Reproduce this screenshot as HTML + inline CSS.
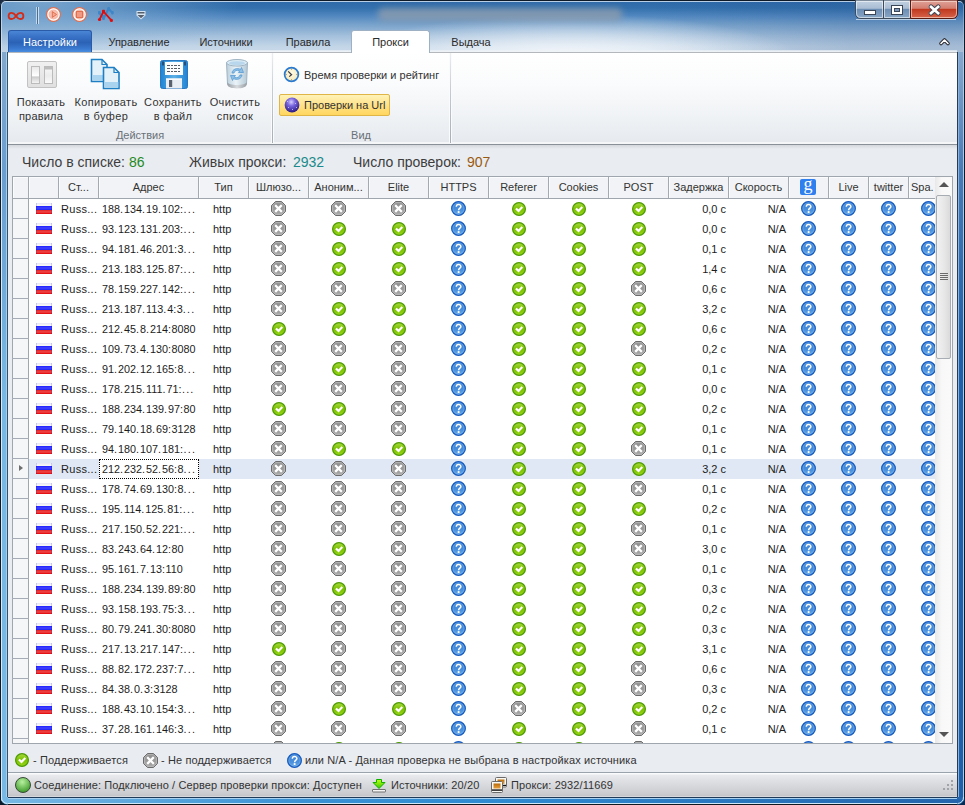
<!DOCTYPE html>
<html><head><meta charset="utf-8">
<style>
*{box-sizing:border-box}
html,body{margin:0;padding:0;width:965px;height:805px;overflow:hidden;font-family:"Liberation Sans",sans-serif;}
body{position:relative;background:#1b2a3e;}
.abs{position:absolute}
#glass{position:absolute;left:0;top:0;width:965px;height:805px;border-radius:6px 6px 0 0;overflow:hidden;
 background:
  radial-gradient(ellipse 230px 46px at 570px 60px, rgba(250,251,253,0.95), rgba(250,251,253,0.45) 55%, rgba(250,251,253,0) 100%),
  radial-gradient(ellipse 200px 60px at 40px 0px, rgba(140,180,215,0.8), rgba(140,180,215,0) 100%),
  linear-gradient(90deg, rgba(30,70,130,0) 650px, rgba(30,70,130,0.18) 850px, rgba(30,70,130,0.18) 965px),
  linear-gradient(180deg,#2d68a8 0px,#3370ac 8px,#5288c0 16px,#7aa4cc 25px,#a4c0dc 36px,#c2d5e7 46px,#c8d9e9 52px,#c8d9e9 805px);}
#tline{position:absolute;left:0;top:0;width:965px;height:805px;border-radius:6px 6px 0 0;border-top:1px solid #0e1a28;border-left:1px solid #0e1a28;border-right:1px solid #0e1a28;}
#tline2{position:absolute;left:1px;top:1px;width:963px;height:804px;border-radius:5px 5px 0 0;border-top:1px solid rgba(230,240,250,0.75);border-left:1px solid rgba(230,240,250,0.6);border-right:1px solid rgba(200,220,240,0.4);}
#lframe{position:absolute;left:0;top:52px;width:8px;height:753px;background:linear-gradient(90deg,#08101a 0,#08101a 1px,#c0e0f8 1px,#c0e0f8 2px,transparent 2px,transparent 6px,#a0d0f0 6px,#a0d0f0 7px,#3a5068 7px),linear-gradient(180deg,#82a8cc 0,#6a9ed0 120px,#78b8e4 350px,#78b8e4 753px)}

#rframe{position:absolute;left:957px;top:52px;width:8px;height:753px;background:linear-gradient(90deg,#2a3a50 0,#2a3a50 1px,#8ab4e0 1px,#8ab4e0 2px,#2060a8 2px,#2060a8 6px,#a0c0e0 6px,#a0c0e0 7px,#0a0a20 7px)}
#rframe2{position:absolute;left:959px;top:52px;width:4px;height:300px;background:linear-gradient(180deg,#88a8cc,rgba(100,140,190,0.6) 40%,rgba(32,96,168,0))}
#bframe{position:absolute;left:0;top:797px;width:965px;height:8px;background:linear-gradient(90deg,#78b8e4 0,#3a92d4 300px,#2f8ad0 500px,#2464ac 965px);}
#bframe2{position:absolute;left:8px;top:797px;width:949px;height:8px;background:linear-gradient(180deg,#1e3a58 0,#1e3a58 1px,#a8d0f0 1px,#a8d0f0 2px,transparent 2px,transparent 6px,#d0e8f8 6px,#d0e8f8 7px,#101820 7px)}
#corners{position:absolute;left:0;top:797px;width:965px;height:8px;}
#client{position:absolute;left:8px;top:52px;width:949px;height:745px;background:#e9ecf1;}
#ttl{position:absolute;left:378px;top:8px;width:244px;height:13px;background:rgba(145,158,172,0.75);filter:blur(3px);border-radius:5px}
/* tabs */
.tab{position:absolute;top:30px;height:22px;font-size:11px;line-height:24px;text-align:center;color:#2a2a2a}
#t0{left:8px;width:84px;line-height:23px;background:linear-gradient(180deg,#4a86d6 0,#3a74c8 5px,#2b62b6 55%,#3a7ad0 85%,#4a8ee0);color:#fff;border:1px solid #2b5aa6;border-bottom:none;border-radius:3px 3px 0 0}
#t4{z-index:2;left:351px;width:79px;background:#fff;border:1px solid #9eb0c4;border-bottom:none;border-radius:3px 3px 0 0;height:23px;line-height:23px}
/* ribbon */
#ribbon{position:absolute;left:8px;top:52px;width:949px;height:93px;background:linear-gradient(180deg,#ffffff 0%,#fafbfc 35%,#eef1f4 75%,#e6e9ee 98%,#f4f6f8 98%);border-top:1px solid #b4b8bc;border-bottom:1px solid #8a9098;}
#rshadow{position:absolute;left:8px;top:145px;width:949px;height:4px;background:linear-gradient(180deg,#d4d7db,#e9ecf1)}
.rl{position:absolute;font-size:11px;line-height:14px;color:#333;text-align:center}
.gl{position:absolute;font-size:11px;color:#6a7078;text-align:center;top:129px}
.gsep{position:absolute;top:53px;width:1px;height:90px;background:linear-gradient(180deg,#eceef0,#c8ccd2 40%,#a8aeb6);box-shadow:-1px 0 0 #fafbfc,1px 0 0 #fafbfc}
/* stats */
.st{position:absolute;top:154px;font-size:14px;line-height:16px;color:#3d3d3d}
/* grid */
#grid{position:absolute;left:12px;top:176px;width:941px;height:568px;border:1px solid #a0a6ae;background:#fff}
#hdr{position:absolute;left:13px;top:177px;width:922px;height:22px;background:#f1f3f6;border-bottom:1px solid #a0a6ae;}
.hc{position:absolute;top:177px;height:21px;font-size:11px;line-height:21px;text-align:center;color:#333;border-right:1px solid #a4aab2;box-shadow:inset 1px 1px 0 #fbfcfd;white-space:nowrap;overflow:hidden}
#body{position:absolute;left:12px;top:199px;width:923px;height:544px;overflow:hidden;background:#fff}
#rhcol{position:absolute;left:0;top:0;width:17px;height:544px;background:#f5f6f8;border-left:1px solid #a0a6ae;border-right:1px solid #a0a6ae}
.rh{position:absolute;left:0;width:17px;height:20px;border-bottom:1px solid #a5acb5}
.selbg{position:absolute;left:17px;width:906px;height:20px;background:#dfe8f4}
.focus{position:absolute;left:87px;width:100px;height:20px;border:1px dotted #000;background:#fff}
.arrow{position:absolute;left:7px;width:0;height:0;border-left:4px solid #6e6e6e;border-top:3.5px solid transparent;border-bottom:3.5px solid transparent}
.flag{position:absolute;left:24px;width:16px;height:11px;background:linear-gradient(180deg,#e6e6f6 0,#fafaf4 3px,#1c1cff 3px,#4444ff 5px,#2020f0 7px,#e02020 7px,#f04848 9px,#e00000 11px);box-shadow:inset 1px 0 0 rgba(0,0,200,0.15),inset -1px 0 0 rgba(0,0,200,0.15)}
.t{position:absolute;font-size:11px;line-height:20px;height:20px;color:#1c1c1c;white-space:nowrap}
.adr{left:90px;font-size:10.8px}
.adr b{font-weight:normal;letter-spacing:1px}
.adr i{font-style:normal;letter-spacing:0.5px}
.adr u{text-decoration:none;letter-spacing:1.2px}
.rus{letter-spacing:0.3px}
.r{text-align:right}
.ic{position:absolute}
/* scrollbar */
#sb{position:absolute;left:935px;top:177px;width:17px;height:566px;background:linear-gradient(90deg,#e8e8e8,#f8f8f8 40%,#fafafa)}
#thumb{position:absolute;left:936px;top:195px;width:15px;height:164px;border:1px solid #a8adb3;border-radius:2px;background:linear-gradient(90deg,#f2f2f2,#e6e6e6 60%,#dadada)}
/* legend */
.lg{position:absolute;top:752px;font-size:11px;line-height:16px;color:#333;letter-spacing:0.12px}
#status{position:absolute;left:8px;top:772px;width:949px;height:25px;background:linear-gradient(180deg,#fafbfc 0,#fafbfc 1px,#e8eaed 2px,#dcdee2 9px,#cbcdd1 20px,#c3c5c9 23px,#d6d8db 23px);border-top:1px solid #9aa2ac}
.ss{position:absolute;top:778px;font-size:11px;line-height:14px;color:#333;letter-spacing:0.1px}
</style></head><body>
<svg width="0" height="0" style="position:absolute">
<defs>
<linearGradient id="gck" x1="0" y1="0" x2="0" y2="1"><stop offset="0" stop-color="#a8dc40"/><stop offset="0.5" stop-color="#7cc000"/><stop offset="1" stop-color="#9ad81a"/></linearGradient>
<linearGradient id="gxx" x1="0" y1="0" x2="0" y2="1"><stop offset="0" stop-color="#8c8c8c"/><stop offset="0.6" stop-color="#9c9c9c"/><stop offset="1" stop-color="#a8a8a8"/></linearGradient>
<linearGradient id="gqq" x1="0" y1="0" x2="0" y2="1"><stop offset="0" stop-color="#3a80d4"/><stop offset="0.6" stop-color="#4a90dc"/><stop offset="1" stop-color="#6aaae8"/></linearGradient>
<symbol id="ck" viewBox="0 0 14 14"><circle cx="7" cy="7" r="6.5" fill="url(#gck)"/><circle cx="7" cy="7" r="6.4" fill="none" stroke="#4e9a06" stroke-width="1.2"/><path d="M3.9 6.5 L6.5 8.9 L10.3 4.9" fill="none" stroke="#fff" stroke-width="2.2" stroke-linejoin="miter" stroke-linecap="butt"/></symbol>
<symbol id="xx" viewBox="0 0 15 15"><path d="M4.5 0.5 H10.5 L14.5 4.5 V10.5 L10.5 14.5 H4.5 L0.5 10.5 V4.5 Z" fill="url(#gxx)" stroke="#6c6c6c" stroke-width="1"/><path d="M4.6 1.7 H10.4 L13.3 4.6 V10.4 L10.4 13.3 H4.6 L1.7 10.4 V4.6 Z" fill="none" stroke="#bdbdbd" stroke-width="0.9"/><path d="M5 5 L10 10 M10 5 L5 10" stroke="#fff" stroke-width="2.3" stroke-linecap="square"/></symbol>
<symbol id="qq" viewBox="0 0 15 15"><circle cx="7.5" cy="7.5" r="7" fill="url(#gqq)"/><circle cx="7.5" cy="7.5" r="6.8" fill="none" stroke="#1a5cc0" stroke-width="1.3"/><circle cx="7.5" cy="7.5" r="5.6" fill="none" stroke="#8cc0f0" stroke-width="0.6" opacity="0.7"/><path d="M5.3 5.7 C5.3 2.9 9.9 2.9 9.9 5.5 C9.9 7.3 7.6 7.0 7.6 9.2" fill="none" stroke="#fff" stroke-width="1.45"/><rect x="6.7" y="10.1" width="1.8" height="1.9" fill="#fff"/></symbol>
</defs></svg>

<div id="glass"></div>
<div id="ttl"></div>
<div id="lframe"></div>
<div id="rframe"></div><div id="rframe2"></div>
<div id="bframe"></div><div id="bframe2"></div>
<div id="tline"></div><div id="tline2"></div>
<svg class="abs" style="left:0;top:797px" width="8" height="8"><path d="M0 0 V8 H8 V7.5 A7 7 0 0 1 0.5 0 Z" fill="#0a1a2a"/><path d="M1.5 0 A6 6 0 0 0 7.5 6.5" fill="none" stroke="#d0e8f8" stroke-width="1"/></svg>
<svg class="abs" style="left:957px;top:797px" width="8" height="8"><path d="M8 0 V8 H0 V7.5 A7 7 0 0 0 7.5 0 Z" fill="#0a2a50"/><path d="M6.5 0 A6 6 0 0 1 0.5 6.5" fill="none" stroke="#d0e8f8" stroke-width="1"/></svg>

<div id="client"></div>

<!-- title bar stuff -->
<svg class="abs" style="left:0px;top:0px" width="150" height="30">
<defs><radialGradient id="pk" cx="0.5" cy="0.5" r="0.5"><stop offset="0" stop-color="#fbd6cc"/><stop offset="0.7" stop-color="#f6b4a4"/><stop offset="1" stop-color="#f0a090"/></radialGradient></defs>
<path d="M16 15.9 C14.4 13.6 13.3 12.8 11.6 12.8 C9.6 12.8 8.6 14.3 8.6 15.9 C8.6 17.5 9.6 19 11.6 19 C13.3 19 14.4 18.2 16 15.9 C17.6 13.6 18.7 12.8 20.4 12.8 C22.4 12.8 23.4 14.3 23.4 15.9 C23.4 17.5 22.4 19 20.4 19 C18.7 19 17.6 18.2 16 15.9 Z" fill="none" stroke="#d42c18" stroke-width="1.8"/>
<line x1="36.5" y1="7" x2="36.5" y2="24" stroke="rgba(225,236,246,0.7)" stroke-width="1"/><line x1="37.5" y1="7" x2="37.5" y2="24" stroke="#4e6e8e" stroke-width="1"/><line x1="38.5" y1="7" x2="38.5" y2="24" stroke="rgba(225,236,246,0.8)" stroke-width="1"/>
<circle cx="53.5" cy="14.5" r="6.9" fill="url(#pk)" stroke="#e07050" stroke-width="1.2"/><circle cx="53.5" cy="14.5" r="5.6" fill="none" stroke="#fff" stroke-width="1.2"/>
<path d="M52.3 11.6 L56.6 14.5 L52.3 17.4 Z" fill="#f6a894" stroke="#e07050" stroke-width="1"/>
<circle cx="79.5" cy="14.5" r="6.9" fill="url(#pk)" stroke="#e07050" stroke-width="1.2"/><circle cx="79.5" cy="14.5" r="5.6" fill="none" stroke="#fff" stroke-width="1.2"/>
<rect x="76.5" y="11.5" width="6" height="6" fill="#f09a84" stroke="#e07050" stroke-width="1"/>
<polyline points="99.3,12.7 103.5,18.5 108.6,8.7 112.3,12.7" fill="none" stroke="#3f86c8" stroke-width="2.2" stroke-linejoin="round"/>
<rect x="98" y="11" width="2.6" height="3.4" rx="0.8" fill="#3f86c8"/><rect x="102.4" y="15" width="2.3" height="5" rx="0.8" fill="#3f86c8"/><rect x="107.4" y="7" width="2.6" height="3.4" rx="0.8" fill="#3f86c8"/><rect x="111.1" y="11" width="2.6" height="3.4" rx="0.8" fill="#3f86c8"/>
<polyline points="99.5,19.5 103.5,11.5 111.4,20.4" fill="none" stroke="#e00c0c" stroke-width="1.7"/>
<rect x="102" y="9.7" width="3" height="3.6" rx="0.8" fill="#e00c0c"/><circle cx="99.5" cy="19.5" r="1.6" fill="#e00c0c"/><circle cx="111.4" cy="20.4" r="1.6" fill="#e00c0c"/>
<path d="M136.5 11 H145.5 V15.5 L141 19.5 L136.5 15.5 Z" fill="rgba(235,242,248,0.85)"/><rect x="137.5" y="12" width="7" height="1.5" fill="#55606c"/><path d="M137.5 15 L144.5 15 L141 18.3 Z" fill="#55606c"/>
</svg>

<!-- window buttons -->
<svg class="abs" style="left:852px;top:0px" width="113" height="24">
<defs>
<linearGradient id="wb" x1="0" y1="0" x2="0" y2="1"><stop offset="0" stop-color="#c4d3e3"/><stop offset="0.45" stop-color="#a9bdd3"/><stop offset="0.5" stop-color="#6c8db3"/><stop offset="1" stop-color="#8aa7c6"/></linearGradient>
<linearGradient id="wc" x1="0" y1="0" x2="0" y2="1"><stop offset="0" stop-color="#e0a59c"/><stop offset="0.45" stop-color="#d47e70"/><stop offset="0.5" stop-color="#c0391f"/><stop offset="1" stop-color="#d8664c"/></linearGradient>
</defs>
<path d="M3.5 0 V13 Q3.5 18.5 9 18.5 H58.5 V0 Z" fill="url(#wb)" stroke="#3c4a5c" stroke-width="1"/>
<path d="M4.5 1.5 V13 Q4.5 17.5 9 17.5 H30.5 V1.5 Z" fill="none" stroke="rgba(255,255,255,0.55)" stroke-width="1"/>
<path d="M32.5 1.5 V17.5 H57.5 V1.5 Z" fill="none" stroke="rgba(255,255,255,0.55)" stroke-width="1"/>
<line x1="31.5" y1="0" x2="31.5" y2="19" stroke="#3c4a5c"/>
<path d="M58.5 0 V18.5 H100 Q105.5 18.5 105.5 13 V0 Z" fill="url(#wc)" stroke="#5a1a10" stroke-width="1"/>
<path d="M59.5 1.5 V17.5 H100 Q104.5 17.5 104.5 13 V1.5 Z" fill="none" stroke="rgba(255,230,220,0.6)" stroke-width="1"/>
<path d="M4 19.5 H104" stroke="rgba(230,240,250,0.7)" stroke-width="1"/>
<rect x="12.5" y="10.5" width="11" height="4" fill="#fff" stroke="#3a4656" stroke-width="1"/>
<rect x="39.5" y="5.5" width="11" height="9" fill="#fff" stroke="#3a4656" stroke-width="1"/>
<rect x="42.5" y="8.5" width="5" height="3" fill="#7d98b8" stroke="#3a4656" stroke-width="1"/>
<path d="M79 6.8 L86.2 13.2 M86.2 6.8 L79 13.2" stroke="#3a4656" stroke-width="4.6" stroke-linecap="round"/><path d="M79 6.8 L86.2 13.2 M86.2 6.8 L79 13.2" stroke="#fff" stroke-width="2.6" stroke-linecap="square"/>
</svg>

<!-- tabs -->
<div class="abs" style="left:92px;top:50px;width:865px;height:2px;background:linear-gradient(180deg,rgba(236,241,246,0.6),#f0f4f8)"></div>
<div class="tab" id="t0">Настройки</div>
<div class="tab" style="left:101px;width:76px">Управление</div>
<div class="tab" style="left:190px;width:72px">Источники</div>
<div class="tab" style="left:277px;width:62px">Правила</div>
<div class="tab" id="t4">Прокси</div>
<div class="tab" style="left:440px;width:62px">Выдача</div>
<svg class="abs" style="left:938px;top:35px" width="14" height="12"><path d="M3 8.5 L6.5 5 L10 8.5" fill="none" stroke="#2a2a30" stroke-width="3.6" stroke-linecap="round" stroke-linejoin="round"/><path d="M3 8.5 L6.5 5 L10 8.5" fill="none" stroke="#fff" stroke-width="1.6" stroke-linecap="round" stroke-linejoin="round"/></svg>

<div id="ribbon"></div><div id="rshadow"></div>
<!-- ribbon icons -->
<div class="abs" style="left:27px;top:61px;width:30px;height:27px;border:1px solid #c2c2c2;border-radius:2px;background:linear-gradient(180deg,#f0f0f0,#e0e0e0)"></div>
<div class="abs" style="left:31px;top:66px;width:9px;height:18px;border:1px solid #bbb;background:linear-gradient(180deg,#e8e8e8,#fff 55%,#ccc 62%,#f4f4f4)"></div>
<div class="abs" style="left:44px;top:66px;width:9px;height:18px;border:1px solid #bbb;background:linear-gradient(180deg,#bdbdbd 0,#bdbdbd 2px,#f4f4f4 3px,#ececec 55%,#fafafa)"></div>
<svg class="abs" style="left:90px;top:58px" width="34" height="32"><path d="M1.5 1.5 H12 L17 6.5 V23.5 H1.5 Z" fill="#e4f1f9" stroke="#1e7fc4" stroke-width="1.6"/><path d="M12 1.5 V6.5 H17" fill="none" stroke="#1e7fc4" stroke-width="1.2"/><rect x="2.3" y="17" width="14" height="5.5" fill="#a9d3ee"/><path d="M13.5 9.5 H24 L29 14.5 V30.5 H13.5 Z" fill="#e4f1f9" stroke="#1e7fc4" stroke-width="1.6"/><path d="M24 9.5 V14.5 H29" fill="none" stroke="#1e7fc4" stroke-width="1.2"/><rect x="14.3" y="24" width="14" height="5.5" fill="#a9d3ee"/></svg>
<svg class="abs" style="left:159px;top:59px" width="30" height="31"><defs><linearGradient id="fl" x1="0" y1="0" x2="1" y2="0"><stop offset="0" stop-color="#1f84d4"/><stop offset="0.5" stop-color="#5cb0e6"/><stop offset="1" stop-color="#1f84d4"/></linearGradient></defs><rect x="1.5" y="1.5" width="27" height="28" rx="2" fill="url(#fl)" stroke="#2a78c0" stroke-width="1"/><rect x="6" y="3" width="18" height="13" fill="#fbfdff"/><path d="M3 2.5 H5 V7 L4 6 L3 7Z M25 2.5 H27 V7 L26 6 L25 7Z" fill="#24507a"/><path d="M8 6.5 H22 M8 9.5 H22 M8 12.5 H22" stroke="#555c66" stroke-width="1" stroke-dasharray="3 1 2 1"/><rect x="7" y="19.5" width="16" height="10" fill="#e8eef4"/><rect x="7" y="19.5" width="16" height="1.2" fill="#fff"/><rect x="10" y="21" width="3.2" height="7" fill="#5a6270"/></svg>
<svg class="abs" style="left:225px;top:58px" width="24" height="33"><defs><linearGradient id="tr" x1="0" y1="0" x2="1" y2="0"><stop offset="0" stop-color="#bcd0dc"/><stop offset="0.45" stop-color="#eaf3f8"/><stop offset="1" stop-color="#b4c8d4"/></linearGradient><linearGradient id="trb" x1="0" y1="0" x2="1" y2="0"><stop offset="0" stop-color="#9aa0a6"/><stop offset="0.5" stop-color="#d8dcdf"/><stop offset="1" stop-color="#9aa0a6"/></linearGradient></defs><path d="M1.5 4.5 L2.5 26 C3 30.5 21 30.5 21.5 26 L22.5 4.5 Z" fill="url(#tr)" stroke="#9fb4c2" stroke-width="1"/><path d="M2.4 24 C3 28 21 28 21.6 24 L21.5 27 C21 31.5 3 31.5 2.5 27 Z" fill="url(#trb)"/><ellipse cx="12" cy="4.8" rx="10.5" ry="3.3" fill="#dcecf6" stroke="#9fb4c2" stroke-width="1"/><ellipse cx="12" cy="5.2" rx="8" ry="2" fill="#b8d6ec"/><path d="M7 15 C7.5 11 12 9.5 15.5 11.5 L16.5 9.5 L18.5 14.5 L13.5 14.5 L14.8 12.8 C12 11.6 9.5 12.6 9 15 Z" fill="#8cc0e8" stroke="#5a9ad0" stroke-width="0.8"/><path d="M17 17 C16.5 21 12 22.5 8.5 20.5 L7.5 22.5 L5.5 17.5 L10.5 17.5 L9.2 19.2 C12 20.4 14.5 19.4 15 17 Z" fill="#8cc0e8" stroke="#5a9ad0" stroke-width="0.8"/></svg>

<div class="rl" style="left:11px;top:95px;width:60px;letter-spacing:0.2px">Показать<br>правила</div>
<div class="rl" style="left:70px;top:95px;width:72px;letter-spacing:0.4px">Копировать<br>в буфер</div>
<div class="rl" style="left:140px;top:95px;width:66px;letter-spacing:0.35px">Сохранить<br>в файл</div>
<div class="rl" style="left:205px;top:95px;width:60px;letter-spacing:0.35px">Очистить<br>список</div>
<div class="gl" style="left:100px;width:80px">Действия</div>
<div class="gsep" style="left:272px"></div>
<div class="gsep" style="left:450px"></div>
<svg class="abs" style="left:283px;top:66px" width="17" height="17"><defs><radialGradient id="clk" cx="0.5" cy="0.4" r="0.6"><stop offset="0" stop-color="#fffbe8"/><stop offset="1" stop-color="#f4e6b4"/></radialGradient></defs><circle cx="8.5" cy="8.5" r="6.9" fill="url(#clk)" stroke="#2a7ad0" stroke-width="1.7"/><path d="M5.2 5.4 L8.6 8.7 L6.2 10.6" fill="none" stroke="#3a3a40" stroke-width="1.2"/><g fill="#8a8070"><rect x="8" y="2.6" width="1" height="1"/><rect x="8" y="13.4" width="1" height="1"/><rect x="2.6" y="8" width="1" height="1"/><rect x="13.4" y="8" width="1" height="1"/></g></svg>
<div class="rl" style="left:304px;top:68px;text-align:left;white-space:nowrap">Время проверки и рейтинг</div>
<div class="abs" style="left:279px;top:94px;width:111px;height:22px;border:1px solid #e0b548;border-radius:2px;background:linear-gradient(180deg,#fff3b8,#ffe28a 50%,#ffd65e)"></div>
<svg class="abs" style="left:284px;top:97px" width="16" height="16"><defs><radialGradient id="gb" cx="0.45" cy="0.3" r="0.75"><stop offset="0" stop-color="#d8d0ff"/><stop offset="0.35" stop-color="#7a68e0"/><stop offset="1" stop-color="#20107a"/></radialGradient></defs><circle cx="8" cy="8" r="7.4" fill="url(#gb)"/><g fill="#d8d0ff" opacity="0.8"><rect x="3" y="4" width="1" height="1"/><rect x="11" y="6" width="1" height="1"/><rect x="4" y="10" width="1" height="1"/><rect x="12" y="10" width="1" height="1"/><rect x="8" y="12" width="1" height="1"/></g></svg>
<div class="rl" style="left:304px;top:98px;text-align:left;white-space:nowrap">Проверки на Url</div>
<div class="gl" style="left:331px;width:60px">Вид</div>

<!-- stats -->
<div class="st" style="left:22px">Число в списке:</div>
<div class="st" style="left:129px;color:#1e8a1e">86</div>
<div class="st" style="left:189px">Живых прокси:</div>
<div class="st" style="left:293px;color:#1a8a8a">2932</div>
<div class="st" style="left:353px">Число проверок:</div>
<div class="st" style="left:467px;color:#9a5a10">907</div>

<!-- grid -->
<div id="grid"></div>
<div id="hdr"></div>
<div class="hc" style="left:13px;width:16px"></div>
<div class="hc" style="left:29px;width:30px"></div>
<div class="hc" style="left:59px;width:40px">Ст...</div>
<div class="hc" style="left:99px;width:100px">Адрес</div>
<div class="hc" style="left:199px;width:50px">Тип</div>
<div class="hc" style="left:249px;width:60px">Шлюзо...</div>
<div class="hc" style="left:309px;width:60px">Аноним...</div>
<div class="hc" style="left:369px;width:60px">Elite</div>
<div class="hc" style="left:429px;width:60px">HTTPS</div>
<div class="hc" style="left:489px;width:60px">Referer</div>
<div class="hc" style="left:549px;width:60px">Cookies</div>
<div class="hc" style="left:609px;width:60px">POST</div>
<div class="hc" style="left:669px;width:60px">Задержка</div>
<div class="hc" style="left:729px;width:60px">Скорость</div>
<div class="hc" style="left:789px;width:40px"></div>
<div class="abs" style="left:800px;top:179px;width:16px;height:16px;background:#2f7fee;border-radius:2px;"></div><div class="abs" style="left:800px;top:176px;width:16px;height:16px;color:#fff;font-size:18px;line-height:16px;text-align:center;font-family:'Liberation Serif',serif">g</div>
<div class="hc" style="left:829px;width:40px">Live</div>
<div class="hc" style="left:869px;width:40px">twitter</div>
<div class="hc" style="left:909px;width:26px;border-right:none;text-align:left;padding-left:2px">Spa.</div>

<div id="body">
<div id="rhcol"></div>
<div class="rh" style="top:0px"></div>
<div class="flag" style="top:4px"></div>
<div class="t rus" style="left:49px;top:0px">Russ...</div>
<div class="t adr" style="top:0px">188<b>.</b>134<b>.</b>19<b>.</b>102<i>:</i><u>...</u></div>
<div class="t" style="left:201px;top:0px">http</div>
<svg class="ic" style="left:259px;top:2px" width="15" height="15"><use href="#xx"/></svg>
<svg class="ic" style="left:319px;top:2px" width="15" height="15"><use href="#xx"/></svg>
<svg class="ic" style="left:379px;top:2px" width="15" height="15"><use href="#xx"/></svg>
<svg class="ic" style="left:439px;top:2px" width="15" height="15"><use href="#qq"/></svg>
<svg class="ic" style="left:500px;top:3px" width="14" height="14"><use href="#ck"/></svg>
<svg class="ic" style="left:560px;top:3px" width="14" height="14"><use href="#ck"/></svg>
<svg class="ic" style="left:620px;top:3px" width="14" height="14"><use href="#ck"/></svg>
<div class="t r" style="left:656px;width:58px;top:0px">0,0 c</div>
<div class="t r" style="left:716px;width:58px;top:0px">N/A</div>
<svg class="ic" style="left:789px;top:2px" width="15" height="15"><use href="#qq"/></svg>
<svg class="ic" style="left:829px;top:2px" width="15" height="15"><use href="#qq"/></svg>
<svg class="ic" style="left:869px;top:2px" width="15" height="15"><use href="#qq"/></svg>
<svg class="ic" style="left:909px;top:2px" width="15" height="15"><use href="#qq"/></svg>
<div class="rh" style="top:20px"></div>
<div class="flag" style="top:24px"></div>
<div class="t rus" style="left:49px;top:20px">Russ...</div>
<div class="t adr" style="top:20px">93<b>.</b>123<b>.</b>131<b>.</b>203<i>:</i><u>...</u></div>
<div class="t" style="left:201px;top:20px">http</div>
<svg class="ic" style="left:259px;top:22px" width="15" height="15"><use href="#xx"/></svg>
<svg class="ic" style="left:320px;top:23px" width="14" height="14"><use href="#ck"/></svg>
<svg class="ic" style="left:380px;top:23px" width="14" height="14"><use href="#ck"/></svg>
<svg class="ic" style="left:439px;top:22px" width="15" height="15"><use href="#qq"/></svg>
<svg class="ic" style="left:500px;top:23px" width="14" height="14"><use href="#ck"/></svg>
<svg class="ic" style="left:560px;top:23px" width="14" height="14"><use href="#ck"/></svg>
<svg class="ic" style="left:620px;top:23px" width="14" height="14"><use href="#ck"/></svg>
<div class="t r" style="left:656px;width:58px;top:20px">0,0 c</div>
<div class="t r" style="left:716px;width:58px;top:20px">N/A</div>
<svg class="ic" style="left:789px;top:22px" width="15" height="15"><use href="#qq"/></svg>
<svg class="ic" style="left:829px;top:22px" width="15" height="15"><use href="#qq"/></svg>
<svg class="ic" style="left:869px;top:22px" width="15" height="15"><use href="#qq"/></svg>
<svg class="ic" style="left:909px;top:22px" width="15" height="15"><use href="#qq"/></svg>
<div class="rh" style="top:40px"></div>
<div class="flag" style="top:44px"></div>
<div class="t rus" style="left:49px;top:40px">Russ...</div>
<div class="t adr" style="top:40px">94<b>.</b>181<b>.</b>46<b>.</b>201<i>:</i>3<u>...</u></div>
<div class="t" style="left:201px;top:40px">http</div>
<svg class="ic" style="left:259px;top:42px" width="15" height="15"><use href="#xx"/></svg>
<svg class="ic" style="left:320px;top:43px" width="14" height="14"><use href="#ck"/></svg>
<svg class="ic" style="left:380px;top:43px" width="14" height="14"><use href="#ck"/></svg>
<svg class="ic" style="left:439px;top:42px" width="15" height="15"><use href="#qq"/></svg>
<svg class="ic" style="left:500px;top:43px" width="14" height="14"><use href="#ck"/></svg>
<svg class="ic" style="left:560px;top:43px" width="14" height="14"><use href="#ck"/></svg>
<svg class="ic" style="left:620px;top:43px" width="14" height="14"><use href="#ck"/></svg>
<div class="t r" style="left:656px;width:58px;top:40px">0,1 c</div>
<div class="t r" style="left:716px;width:58px;top:40px">N/A</div>
<svg class="ic" style="left:789px;top:42px" width="15" height="15"><use href="#qq"/></svg>
<svg class="ic" style="left:829px;top:42px" width="15" height="15"><use href="#qq"/></svg>
<svg class="ic" style="left:869px;top:42px" width="15" height="15"><use href="#qq"/></svg>
<svg class="ic" style="left:909px;top:42px" width="15" height="15"><use href="#qq"/></svg>
<div class="rh" style="top:60px"></div>
<div class="flag" style="top:64px"></div>
<div class="t rus" style="left:49px;top:60px">Russ...</div>
<div class="t adr" style="top:60px">213<b>.</b>183<b>.</b>125<b>.</b>87<i>:</i><u>...</u></div>
<div class="t" style="left:201px;top:60px">http</div>
<svg class="ic" style="left:259px;top:62px" width="15" height="15"><use href="#xx"/></svg>
<svg class="ic" style="left:320px;top:63px" width="14" height="14"><use href="#ck"/></svg>
<svg class="ic" style="left:380px;top:63px" width="14" height="14"><use href="#ck"/></svg>
<svg class="ic" style="left:439px;top:62px" width="15" height="15"><use href="#qq"/></svg>
<svg class="ic" style="left:500px;top:63px" width="14" height="14"><use href="#ck"/></svg>
<svg class="ic" style="left:560px;top:63px" width="14" height="14"><use href="#ck"/></svg>
<svg class="ic" style="left:620px;top:63px" width="14" height="14"><use href="#ck"/></svg>
<div class="t r" style="left:656px;width:58px;top:60px">1,4 c</div>
<div class="t r" style="left:716px;width:58px;top:60px">N/A</div>
<svg class="ic" style="left:789px;top:62px" width="15" height="15"><use href="#qq"/></svg>
<svg class="ic" style="left:829px;top:62px" width="15" height="15"><use href="#qq"/></svg>
<svg class="ic" style="left:869px;top:62px" width="15" height="15"><use href="#qq"/></svg>
<svg class="ic" style="left:909px;top:62px" width="15" height="15"><use href="#qq"/></svg>
<div class="rh" style="top:80px"></div>
<div class="flag" style="top:84px"></div>
<div class="t rus" style="left:49px;top:80px">Russ...</div>
<div class="t adr" style="top:80px">78<b>.</b>159<b>.</b>227<b>.</b>142<i>:</i><u>...</u></div>
<div class="t" style="left:201px;top:80px">http</div>
<svg class="ic" style="left:259px;top:82px" width="15" height="15"><use href="#xx"/></svg>
<svg class="ic" style="left:319px;top:82px" width="15" height="15"><use href="#xx"/></svg>
<svg class="ic" style="left:379px;top:82px" width="15" height="15"><use href="#xx"/></svg>
<svg class="ic" style="left:439px;top:82px" width="15" height="15"><use href="#qq"/></svg>
<svg class="ic" style="left:500px;top:83px" width="14" height="14"><use href="#ck"/></svg>
<svg class="ic" style="left:560px;top:83px" width="14" height="14"><use href="#ck"/></svg>
<svg class="ic" style="left:619px;top:82px" width="15" height="15"><use href="#xx"/></svg>
<div class="t r" style="left:656px;width:58px;top:80px">0,6 c</div>
<div class="t r" style="left:716px;width:58px;top:80px">N/A</div>
<svg class="ic" style="left:789px;top:82px" width="15" height="15"><use href="#qq"/></svg>
<svg class="ic" style="left:829px;top:82px" width="15" height="15"><use href="#qq"/></svg>
<svg class="ic" style="left:869px;top:82px" width="15" height="15"><use href="#qq"/></svg>
<svg class="ic" style="left:909px;top:82px" width="15" height="15"><use href="#qq"/></svg>
<div class="rh" style="top:100px"></div>
<div class="flag" style="top:104px"></div>
<div class="t rus" style="left:49px;top:100px">Russ...</div>
<div class="t adr" style="top:100px">213<b>.</b>187<b>.</b>113<b>.</b>4<i>:</i>3<u>...</u></div>
<div class="t" style="left:201px;top:100px">http</div>
<svg class="ic" style="left:259px;top:102px" width="15" height="15"><use href="#xx"/></svg>
<svg class="ic" style="left:320px;top:103px" width="14" height="14"><use href="#ck"/></svg>
<svg class="ic" style="left:380px;top:103px" width="14" height="14"><use href="#ck"/></svg>
<svg class="ic" style="left:439px;top:102px" width="15" height="15"><use href="#qq"/></svg>
<svg class="ic" style="left:500px;top:103px" width="14" height="14"><use href="#ck"/></svg>
<svg class="ic" style="left:560px;top:103px" width="14" height="14"><use href="#ck"/></svg>
<svg class="ic" style="left:620px;top:103px" width="14" height="14"><use href="#ck"/></svg>
<div class="t r" style="left:656px;width:58px;top:100px">3,2 c</div>
<div class="t r" style="left:716px;width:58px;top:100px">N/A</div>
<svg class="ic" style="left:789px;top:102px" width="15" height="15"><use href="#qq"/></svg>
<svg class="ic" style="left:829px;top:102px" width="15" height="15"><use href="#qq"/></svg>
<svg class="ic" style="left:869px;top:102px" width="15" height="15"><use href="#qq"/></svg>
<svg class="ic" style="left:909px;top:102px" width="15" height="15"><use href="#qq"/></svg>
<div class="rh" style="top:120px"></div>
<div class="flag" style="top:124px"></div>
<div class="t rus" style="left:49px;top:120px">Russ...</div>
<div class="t adr" style="top:120px">212<b>.</b>45<b>.</b>8<b>.</b>214<i>:</i>8080</div>
<div class="t" style="left:201px;top:120px">http</div>
<svg class="ic" style="left:260px;top:123px" width="14" height="14"><use href="#ck"/></svg>
<svg class="ic" style="left:320px;top:123px" width="14" height="14"><use href="#ck"/></svg>
<svg class="ic" style="left:380px;top:123px" width="14" height="14"><use href="#ck"/></svg>
<svg class="ic" style="left:439px;top:122px" width="15" height="15"><use href="#qq"/></svg>
<svg class="ic" style="left:500px;top:123px" width="14" height="14"><use href="#ck"/></svg>
<svg class="ic" style="left:560px;top:123px" width="14" height="14"><use href="#ck"/></svg>
<svg class="ic" style="left:620px;top:123px" width="14" height="14"><use href="#ck"/></svg>
<div class="t r" style="left:656px;width:58px;top:120px">0,6 c</div>
<div class="t r" style="left:716px;width:58px;top:120px">N/A</div>
<svg class="ic" style="left:789px;top:122px" width="15" height="15"><use href="#qq"/></svg>
<svg class="ic" style="left:829px;top:122px" width="15" height="15"><use href="#qq"/></svg>
<svg class="ic" style="left:869px;top:122px" width="15" height="15"><use href="#qq"/></svg>
<svg class="ic" style="left:909px;top:122px" width="15" height="15"><use href="#qq"/></svg>
<div class="rh" style="top:140px"></div>
<div class="flag" style="top:144px"></div>
<div class="t rus" style="left:49px;top:140px">Russ...</div>
<div class="t adr" style="top:140px">109<b>.</b>73<b>.</b>4<b>.</b>130<i>:</i>8080</div>
<div class="t" style="left:201px;top:140px">http</div>
<svg class="ic" style="left:259px;top:142px" width="15" height="15"><use href="#xx"/></svg>
<svg class="ic" style="left:319px;top:142px" width="15" height="15"><use href="#xx"/></svg>
<svg class="ic" style="left:379px;top:142px" width="15" height="15"><use href="#xx"/></svg>
<svg class="ic" style="left:439px;top:142px" width="15" height="15"><use href="#qq"/></svg>
<svg class="ic" style="left:500px;top:143px" width="14" height="14"><use href="#ck"/></svg>
<svg class="ic" style="left:560px;top:143px" width="14" height="14"><use href="#ck"/></svg>
<svg class="ic" style="left:619px;top:142px" width="15" height="15"><use href="#xx"/></svg>
<div class="t r" style="left:656px;width:58px;top:140px">0,2 c</div>
<div class="t r" style="left:716px;width:58px;top:140px">N/A</div>
<svg class="ic" style="left:789px;top:142px" width="15" height="15"><use href="#qq"/></svg>
<svg class="ic" style="left:829px;top:142px" width="15" height="15"><use href="#qq"/></svg>
<svg class="ic" style="left:869px;top:142px" width="15" height="15"><use href="#qq"/></svg>
<svg class="ic" style="left:909px;top:142px" width="15" height="15"><use href="#qq"/></svg>
<div class="rh" style="top:160px"></div>
<div class="flag" style="top:164px"></div>
<div class="t rus" style="left:49px;top:160px">Russ...</div>
<div class="t adr" style="top:160px">91<b>.</b>202<b>.</b>12<b>.</b>165<i>:</i>8<u>...</u></div>
<div class="t" style="left:201px;top:160px">http</div>
<svg class="ic" style="left:259px;top:162px" width="15" height="15"><use href="#xx"/></svg>
<svg class="ic" style="left:320px;top:163px" width="14" height="14"><use href="#ck"/></svg>
<svg class="ic" style="left:379px;top:162px" width="15" height="15"><use href="#xx"/></svg>
<svg class="ic" style="left:439px;top:162px" width="15" height="15"><use href="#qq"/></svg>
<svg class="ic" style="left:500px;top:163px" width="14" height="14"><use href="#ck"/></svg>
<svg class="ic" style="left:560px;top:163px" width="14" height="14"><use href="#ck"/></svg>
<svg class="ic" style="left:620px;top:163px" width="14" height="14"><use href="#ck"/></svg>
<div class="t r" style="left:656px;width:58px;top:160px">0,1 c</div>
<div class="t r" style="left:716px;width:58px;top:160px">N/A</div>
<svg class="ic" style="left:789px;top:162px" width="15" height="15"><use href="#qq"/></svg>
<svg class="ic" style="left:829px;top:162px" width="15" height="15"><use href="#qq"/></svg>
<svg class="ic" style="left:869px;top:162px" width="15" height="15"><use href="#qq"/></svg>
<svg class="ic" style="left:909px;top:162px" width="15" height="15"><use href="#qq"/></svg>
<div class="rh" style="top:180px"></div>
<div class="flag" style="top:184px"></div>
<div class="t rus" style="left:49px;top:180px">Russ...</div>
<div class="t adr" style="top:180px">178<b>.</b>215<b>.</b>111<b>.</b>71<i>:</i><u>...</u></div>
<div class="t" style="left:201px;top:180px">http</div>
<svg class="ic" style="left:259px;top:182px" width="15" height="15"><use href="#xx"/></svg>
<svg class="ic" style="left:319px;top:182px" width="15" height="15"><use href="#xx"/></svg>
<svg class="ic" style="left:379px;top:182px" width="15" height="15"><use href="#xx"/></svg>
<svg class="ic" style="left:439px;top:182px" width="15" height="15"><use href="#qq"/></svg>
<svg class="ic" style="left:500px;top:183px" width="14" height="14"><use href="#ck"/></svg>
<svg class="ic" style="left:560px;top:183px" width="14" height="14"><use href="#ck"/></svg>
<svg class="ic" style="left:620px;top:183px" width="14" height="14"><use href="#ck"/></svg>
<div class="t r" style="left:656px;width:58px;top:180px">0,0 c</div>
<div class="t r" style="left:716px;width:58px;top:180px">N/A</div>
<svg class="ic" style="left:789px;top:182px" width="15" height="15"><use href="#qq"/></svg>
<svg class="ic" style="left:829px;top:182px" width="15" height="15"><use href="#qq"/></svg>
<svg class="ic" style="left:869px;top:182px" width="15" height="15"><use href="#qq"/></svg>
<svg class="ic" style="left:909px;top:182px" width="15" height="15"><use href="#qq"/></svg>
<div class="rh" style="top:200px"></div>
<div class="flag" style="top:204px"></div>
<div class="t rus" style="left:49px;top:200px">Russ...</div>
<div class="t adr" style="top:200px">188<b>.</b>234<b>.</b>139<b>.</b>97<i>:</i>80</div>
<div class="t" style="left:201px;top:200px">http</div>
<svg class="ic" style="left:260px;top:203px" width="14" height="14"><use href="#ck"/></svg>
<svg class="ic" style="left:320px;top:203px" width="14" height="14"><use href="#ck"/></svg>
<svg class="ic" style="left:379px;top:202px" width="15" height="15"><use href="#xx"/></svg>
<svg class="ic" style="left:439px;top:202px" width="15" height="15"><use href="#qq"/></svg>
<svg class="ic" style="left:500px;top:203px" width="14" height="14"><use href="#ck"/></svg>
<svg class="ic" style="left:560px;top:203px" width="14" height="14"><use href="#ck"/></svg>
<svg class="ic" style="left:620px;top:203px" width="14" height="14"><use href="#ck"/></svg>
<div class="t r" style="left:656px;width:58px;top:200px">0,2 c</div>
<div class="t r" style="left:716px;width:58px;top:200px">N/A</div>
<svg class="ic" style="left:789px;top:202px" width="15" height="15"><use href="#qq"/></svg>
<svg class="ic" style="left:829px;top:202px" width="15" height="15"><use href="#qq"/></svg>
<svg class="ic" style="left:869px;top:202px" width="15" height="15"><use href="#qq"/></svg>
<svg class="ic" style="left:909px;top:202px" width="15" height="15"><use href="#qq"/></svg>
<div class="rh" style="top:220px"></div>
<div class="flag" style="top:224px"></div>
<div class="t rus" style="left:49px;top:220px">Russ...</div>
<div class="t adr" style="top:220px">79<b>.</b>140<b>.</b>18<b>.</b>69<i>:</i>3128</div>
<div class="t" style="left:201px;top:220px">http</div>
<svg class="ic" style="left:259px;top:222px" width="15" height="15"><use href="#xx"/></svg>
<svg class="ic" style="left:319px;top:222px" width="15" height="15"><use href="#xx"/></svg>
<svg class="ic" style="left:379px;top:222px" width="15" height="15"><use href="#xx"/></svg>
<svg class="ic" style="left:439px;top:222px" width="15" height="15"><use href="#qq"/></svg>
<svg class="ic" style="left:500px;top:223px" width="14" height="14"><use href="#ck"/></svg>
<svg class="ic" style="left:560px;top:223px" width="14" height="14"><use href="#ck"/></svg>
<svg class="ic" style="left:620px;top:223px" width="14" height="14"><use href="#ck"/></svg>
<div class="t r" style="left:656px;width:58px;top:220px">0,1 c</div>
<div class="t r" style="left:716px;width:58px;top:220px">N/A</div>
<svg class="ic" style="left:789px;top:222px" width="15" height="15"><use href="#qq"/></svg>
<svg class="ic" style="left:829px;top:222px" width="15" height="15"><use href="#qq"/></svg>
<svg class="ic" style="left:869px;top:222px" width="15" height="15"><use href="#qq"/></svg>
<svg class="ic" style="left:909px;top:222px" width="15" height="15"><use href="#qq"/></svg>
<div class="rh" style="top:240px"></div>
<div class="flag" style="top:244px"></div>
<div class="t rus" style="left:49px;top:240px">Russ...</div>
<div class="t adr" style="top:240px">94<b>.</b>180<b>.</b>107<b>.</b>181<i>:</i><u>...</u></div>
<div class="t" style="left:201px;top:240px">http</div>
<svg class="ic" style="left:259px;top:242px" width="15" height="15"><use href="#xx"/></svg>
<svg class="ic" style="left:320px;top:243px" width="14" height="14"><use href="#ck"/></svg>
<svg class="ic" style="left:380px;top:243px" width="14" height="14"><use href="#ck"/></svg>
<svg class="ic" style="left:439px;top:242px" width="15" height="15"><use href="#qq"/></svg>
<svg class="ic" style="left:500px;top:243px" width="14" height="14"><use href="#ck"/></svg>
<svg class="ic" style="left:560px;top:243px" width="14" height="14"><use href="#ck"/></svg>
<svg class="ic" style="left:619px;top:242px" width="15" height="15"><use href="#xx"/></svg>
<div class="t r" style="left:656px;width:58px;top:240px">0,1 c</div>
<div class="t r" style="left:716px;width:58px;top:240px">N/A</div>
<svg class="ic" style="left:789px;top:242px" width="15" height="15"><use href="#qq"/></svg>
<svg class="ic" style="left:829px;top:242px" width="15" height="15"><use href="#qq"/></svg>
<svg class="ic" style="left:869px;top:242px" width="15" height="15"><use href="#qq"/></svg>
<svg class="ic" style="left:909px;top:242px" width="15" height="15"><use href="#qq"/></svg>
<div class="selbg" style="top:260px"></div>
<div class="focus" style="top:260px"></div>
<div class="arrow" style="top:266px"></div>
<div class="rh" style="top:260px"></div>
<div class="flag" style="top:264px"></div>
<div class="t rus" style="left:49px;top:260px">Russ...</div>
<div class="t adr" style="top:260px">212<b>.</b>232<b>.</b>52<b>.</b>56<i>:</i>8<u>...</u></div>
<div class="t" style="left:201px;top:260px">http</div>
<svg class="ic" style="left:259px;top:262px" width="15" height="15"><use href="#xx"/></svg>
<svg class="ic" style="left:319px;top:262px" width="15" height="15"><use href="#xx"/></svg>
<svg class="ic" style="left:379px;top:262px" width="15" height="15"><use href="#xx"/></svg>
<svg class="ic" style="left:439px;top:262px" width="15" height="15"><use href="#qq"/></svg>
<svg class="ic" style="left:500px;top:263px" width="14" height="14"><use href="#ck"/></svg>
<svg class="ic" style="left:560px;top:263px" width="14" height="14"><use href="#ck"/></svg>
<svg class="ic" style="left:620px;top:263px" width="14" height="14"><use href="#ck"/></svg>
<div class="t r" style="left:656px;width:58px;top:260px">3,2 c</div>
<div class="t r" style="left:716px;width:58px;top:260px">N/A</div>
<svg class="ic" style="left:789px;top:262px" width="15" height="15"><use href="#qq"/></svg>
<svg class="ic" style="left:829px;top:262px" width="15" height="15"><use href="#qq"/></svg>
<svg class="ic" style="left:869px;top:262px" width="15" height="15"><use href="#qq"/></svg>
<svg class="ic" style="left:909px;top:262px" width="15" height="15"><use href="#qq"/></svg>
<div class="rh" style="top:280px"></div>
<div class="flag" style="top:284px"></div>
<div class="t rus" style="left:49px;top:280px">Russ...</div>
<div class="t adr" style="top:280px">178<b>.</b>74<b>.</b>69<b>.</b>130<i>:</i>8<u>...</u></div>
<div class="t" style="left:201px;top:280px">http</div>
<svg class="ic" style="left:259px;top:282px" width="15" height="15"><use href="#xx"/></svg>
<svg class="ic" style="left:319px;top:282px" width="15" height="15"><use href="#xx"/></svg>
<svg class="ic" style="left:379px;top:282px" width="15" height="15"><use href="#xx"/></svg>
<svg class="ic" style="left:439px;top:282px" width="15" height="15"><use href="#qq"/></svg>
<svg class="ic" style="left:500px;top:283px" width="14" height="14"><use href="#ck"/></svg>
<svg class="ic" style="left:560px;top:283px" width="14" height="14"><use href="#ck"/></svg>
<svg class="ic" style="left:619px;top:282px" width="15" height="15"><use href="#xx"/></svg>
<div class="t r" style="left:656px;width:58px;top:280px">0,1 c</div>
<div class="t r" style="left:716px;width:58px;top:280px">N/A</div>
<svg class="ic" style="left:789px;top:282px" width="15" height="15"><use href="#qq"/></svg>
<svg class="ic" style="left:829px;top:282px" width="15" height="15"><use href="#qq"/></svg>
<svg class="ic" style="left:869px;top:282px" width="15" height="15"><use href="#qq"/></svg>
<svg class="ic" style="left:909px;top:282px" width="15" height="15"><use href="#qq"/></svg>
<div class="rh" style="top:300px"></div>
<div class="flag" style="top:304px"></div>
<div class="t rus" style="left:49px;top:300px">Russ...</div>
<div class="t adr" style="top:300px">195<b>.</b>114<b>.</b>125<b>.</b>81<i>:</i><u>...</u></div>
<div class="t" style="left:201px;top:300px">http</div>
<svg class="ic" style="left:259px;top:302px" width="15" height="15"><use href="#xx"/></svg>
<svg class="ic" style="left:319px;top:302px" width="15" height="15"><use href="#xx"/></svg>
<svg class="ic" style="left:379px;top:302px" width="15" height="15"><use href="#xx"/></svg>
<svg class="ic" style="left:439px;top:302px" width="15" height="15"><use href="#qq"/></svg>
<svg class="ic" style="left:500px;top:303px" width="14" height="14"><use href="#ck"/></svg>
<svg class="ic" style="left:560px;top:303px" width="14" height="14"><use href="#ck"/></svg>
<svg class="ic" style="left:620px;top:303px" width="14" height="14"><use href="#ck"/></svg>
<div class="t r" style="left:656px;width:58px;top:300px">0,2 c</div>
<div class="t r" style="left:716px;width:58px;top:300px">N/A</div>
<svg class="ic" style="left:789px;top:302px" width="15" height="15"><use href="#qq"/></svg>
<svg class="ic" style="left:829px;top:302px" width="15" height="15"><use href="#qq"/></svg>
<svg class="ic" style="left:869px;top:302px" width="15" height="15"><use href="#qq"/></svg>
<svg class="ic" style="left:909px;top:302px" width="15" height="15"><use href="#qq"/></svg>
<div class="rh" style="top:320px"></div>
<div class="flag" style="top:324px"></div>
<div class="t rus" style="left:49px;top:320px">Russ...</div>
<div class="t adr" style="top:320px">217<b>.</b>150<b>.</b>52<b>.</b>221<i>:</i><u>...</u></div>
<div class="t" style="left:201px;top:320px">http</div>
<svg class="ic" style="left:259px;top:322px" width="15" height="15"><use href="#xx"/></svg>
<svg class="ic" style="left:319px;top:322px" width="15" height="15"><use href="#xx"/></svg>
<svg class="ic" style="left:379px;top:322px" width="15" height="15"><use href="#xx"/></svg>
<svg class="ic" style="left:439px;top:322px" width="15" height="15"><use href="#qq"/></svg>
<svg class="ic" style="left:500px;top:323px" width="14" height="14"><use href="#ck"/></svg>
<svg class="ic" style="left:560px;top:323px" width="14" height="14"><use href="#ck"/></svg>
<svg class="ic" style="left:619px;top:322px" width="15" height="15"><use href="#xx"/></svg>
<div class="t r" style="left:656px;width:58px;top:320px">0,1 c</div>
<div class="t r" style="left:716px;width:58px;top:320px">N/A</div>
<svg class="ic" style="left:789px;top:322px" width="15" height="15"><use href="#qq"/></svg>
<svg class="ic" style="left:829px;top:322px" width="15" height="15"><use href="#qq"/></svg>
<svg class="ic" style="left:869px;top:322px" width="15" height="15"><use href="#qq"/></svg>
<svg class="ic" style="left:909px;top:322px" width="15" height="15"><use href="#qq"/></svg>
<div class="rh" style="top:340px"></div>
<div class="flag" style="top:344px"></div>
<div class="t rus" style="left:49px;top:340px">Russ...</div>
<div class="t adr" style="top:340px">83<b>.</b>243<b>.</b>64<b>.</b>12<i>:</i>80</div>
<div class="t" style="left:201px;top:340px">http</div>
<svg class="ic" style="left:259px;top:342px" width="15" height="15"><use href="#xx"/></svg>
<svg class="ic" style="left:320px;top:343px" width="14" height="14"><use href="#ck"/></svg>
<svg class="ic" style="left:379px;top:342px" width="15" height="15"><use href="#xx"/></svg>
<svg class="ic" style="left:439px;top:342px" width="15" height="15"><use href="#qq"/></svg>
<svg class="ic" style="left:500px;top:343px" width="14" height="14"><use href="#ck"/></svg>
<svg class="ic" style="left:560px;top:343px" width="14" height="14"><use href="#ck"/></svg>
<svg class="ic" style="left:619px;top:342px" width="15" height="15"><use href="#xx"/></svg>
<div class="t r" style="left:656px;width:58px;top:340px">3,0 c</div>
<div class="t r" style="left:716px;width:58px;top:340px">N/A</div>
<svg class="ic" style="left:789px;top:342px" width="15" height="15"><use href="#qq"/></svg>
<svg class="ic" style="left:829px;top:342px" width="15" height="15"><use href="#qq"/></svg>
<svg class="ic" style="left:869px;top:342px" width="15" height="15"><use href="#qq"/></svg>
<svg class="ic" style="left:909px;top:342px" width="15" height="15"><use href="#qq"/></svg>
<div class="rh" style="top:360px"></div>
<div class="flag" style="top:364px"></div>
<div class="t rus" style="left:49px;top:360px">Russ...</div>
<div class="t adr" style="top:360px">95<b>.</b>161<b>.</b>7<b>.</b>13<i>:</i>110</div>
<div class="t" style="left:201px;top:360px">http</div>
<svg class="ic" style="left:259px;top:362px" width="15" height="15"><use href="#xx"/></svg>
<svg class="ic" style="left:319px;top:362px" width="15" height="15"><use href="#xx"/></svg>
<svg class="ic" style="left:379px;top:362px" width="15" height="15"><use href="#xx"/></svg>
<svg class="ic" style="left:439px;top:362px" width="15" height="15"><use href="#qq"/></svg>
<svg class="ic" style="left:500px;top:363px" width="14" height="14"><use href="#ck"/></svg>
<svg class="ic" style="left:560px;top:363px" width="14" height="14"><use href="#ck"/></svg>
<svg class="ic" style="left:620px;top:363px" width="14" height="14"><use href="#ck"/></svg>
<div class="t r" style="left:656px;width:58px;top:360px">0,1 c</div>
<div class="t r" style="left:716px;width:58px;top:360px">N/A</div>
<svg class="ic" style="left:789px;top:362px" width="15" height="15"><use href="#qq"/></svg>
<svg class="ic" style="left:829px;top:362px" width="15" height="15"><use href="#qq"/></svg>
<svg class="ic" style="left:869px;top:362px" width="15" height="15"><use href="#qq"/></svg>
<svg class="ic" style="left:909px;top:362px" width="15" height="15"><use href="#qq"/></svg>
<div class="rh" style="top:380px"></div>
<div class="flag" style="top:384px"></div>
<div class="t rus" style="left:49px;top:380px">Russ...</div>
<div class="t adr" style="top:380px">188<b>.</b>234<b>.</b>139<b>.</b>89<i>:</i>80</div>
<div class="t" style="left:201px;top:380px">http</div>
<svg class="ic" style="left:259px;top:382px" width="15" height="15"><use href="#xx"/></svg>
<svg class="ic" style="left:320px;top:383px" width="14" height="14"><use href="#ck"/></svg>
<svg class="ic" style="left:379px;top:382px" width="15" height="15"><use href="#xx"/></svg>
<svg class="ic" style="left:439px;top:382px" width="15" height="15"><use href="#qq"/></svg>
<svg class="ic" style="left:500px;top:383px" width="14" height="14"><use href="#ck"/></svg>
<svg class="ic" style="left:560px;top:383px" width="14" height="14"><use href="#ck"/></svg>
<svg class="ic" style="left:620px;top:383px" width="14" height="14"><use href="#ck"/></svg>
<div class="t r" style="left:656px;width:58px;top:380px">0,3 c</div>
<div class="t r" style="left:716px;width:58px;top:380px">N/A</div>
<svg class="ic" style="left:789px;top:382px" width="15" height="15"><use href="#qq"/></svg>
<svg class="ic" style="left:829px;top:382px" width="15" height="15"><use href="#qq"/></svg>
<svg class="ic" style="left:869px;top:382px" width="15" height="15"><use href="#qq"/></svg>
<svg class="ic" style="left:909px;top:382px" width="15" height="15"><use href="#qq"/></svg>
<div class="rh" style="top:400px"></div>
<div class="flag" style="top:404px"></div>
<div class="t rus" style="left:49px;top:400px">Russ...</div>
<div class="t adr" style="top:400px">93<b>.</b>158<b>.</b>193<b>.</b>75<i>:</i>3<u>...</u></div>
<div class="t" style="left:201px;top:400px">http</div>
<svg class="ic" style="left:259px;top:402px" width="15" height="15"><use href="#xx"/></svg>
<svg class="ic" style="left:319px;top:402px" width="15" height="15"><use href="#xx"/></svg>
<svg class="ic" style="left:379px;top:402px" width="15" height="15"><use href="#xx"/></svg>
<svg class="ic" style="left:439px;top:402px" width="15" height="15"><use href="#qq"/></svg>
<svg class="ic" style="left:500px;top:403px" width="14" height="14"><use href="#ck"/></svg>
<svg class="ic" style="left:560px;top:403px" width="14" height="14"><use href="#ck"/></svg>
<svg class="ic" style="left:620px;top:403px" width="14" height="14"><use href="#ck"/></svg>
<div class="t r" style="left:656px;width:58px;top:400px">0,2 c</div>
<div class="t r" style="left:716px;width:58px;top:400px">N/A</div>
<svg class="ic" style="left:789px;top:402px" width="15" height="15"><use href="#qq"/></svg>
<svg class="ic" style="left:829px;top:402px" width="15" height="15"><use href="#qq"/></svg>
<svg class="ic" style="left:869px;top:402px" width="15" height="15"><use href="#qq"/></svg>
<svg class="ic" style="left:909px;top:402px" width="15" height="15"><use href="#qq"/></svg>
<div class="rh" style="top:420px"></div>
<div class="flag" style="top:424px"></div>
<div class="t rus" style="left:49px;top:420px">Russ...</div>
<div class="t adr" style="top:420px">80<b>.</b>79<b>.</b>241<b>.</b>30<i>:</i>8080</div>
<div class="t" style="left:201px;top:420px">http</div>
<svg class="ic" style="left:259px;top:422px" width="15" height="15"><use href="#xx"/></svg>
<svg class="ic" style="left:319px;top:422px" width="15" height="15"><use href="#xx"/></svg>
<svg class="ic" style="left:379px;top:422px" width="15" height="15"><use href="#xx"/></svg>
<svg class="ic" style="left:439px;top:422px" width="15" height="15"><use href="#qq"/></svg>
<svg class="ic" style="left:500px;top:423px" width="14" height="14"><use href="#ck"/></svg>
<svg class="ic" style="left:560px;top:423px" width="14" height="14"><use href="#ck"/></svg>
<svg class="ic" style="left:620px;top:423px" width="14" height="14"><use href="#ck"/></svg>
<div class="t r" style="left:656px;width:58px;top:420px">0,3 c</div>
<div class="t r" style="left:716px;width:58px;top:420px">N/A</div>
<svg class="ic" style="left:789px;top:422px" width="15" height="15"><use href="#qq"/></svg>
<svg class="ic" style="left:829px;top:422px" width="15" height="15"><use href="#qq"/></svg>
<svg class="ic" style="left:869px;top:422px" width="15" height="15"><use href="#qq"/></svg>
<svg class="ic" style="left:909px;top:422px" width="15" height="15"><use href="#qq"/></svg>
<div class="rh" style="top:440px"></div>
<div class="flag" style="top:444px"></div>
<div class="t rus" style="left:49px;top:440px">Russ...</div>
<div class="t adr" style="top:440px">217<b>.</b>13<b>.</b>217<b>.</b>147<i>:</i><u>...</u></div>
<div class="t" style="left:201px;top:440px">http</div>
<svg class="ic" style="left:260px;top:443px" width="14" height="14"><use href="#ck"/></svg>
<svg class="ic" style="left:319px;top:442px" width="15" height="15"><use href="#xx"/></svg>
<svg class="ic" style="left:379px;top:442px" width="15" height="15"><use href="#xx"/></svg>
<svg class="ic" style="left:439px;top:442px" width="15" height="15"><use href="#qq"/></svg>
<svg class="ic" style="left:500px;top:443px" width="14" height="14"><use href="#ck"/></svg>
<svg class="ic" style="left:560px;top:443px" width="14" height="14"><use href="#ck"/></svg>
<svg class="ic" style="left:620px;top:443px" width="14" height="14"><use href="#ck"/></svg>
<div class="t r" style="left:656px;width:58px;top:440px">3,1 c</div>
<div class="t r" style="left:716px;width:58px;top:440px">N/A</div>
<svg class="ic" style="left:789px;top:442px" width="15" height="15"><use href="#qq"/></svg>
<svg class="ic" style="left:829px;top:442px" width="15" height="15"><use href="#qq"/></svg>
<svg class="ic" style="left:869px;top:442px" width="15" height="15"><use href="#qq"/></svg>
<svg class="ic" style="left:909px;top:442px" width="15" height="15"><use href="#qq"/></svg>
<div class="rh" style="top:460px"></div>
<div class="flag" style="top:464px"></div>
<div class="t rus" style="left:49px;top:460px">Russ...</div>
<div class="t adr" style="top:460px">88<b>.</b>82<b>.</b>172<b>.</b>237<i>:</i>7<u>...</u></div>
<div class="t" style="left:201px;top:460px">http</div>
<svg class="ic" style="left:259px;top:462px" width="15" height="15"><use href="#xx"/></svg>
<svg class="ic" style="left:319px;top:462px" width="15" height="15"><use href="#xx"/></svg>
<svg class="ic" style="left:379px;top:462px" width="15" height="15"><use href="#xx"/></svg>
<svg class="ic" style="left:439px;top:462px" width="15" height="15"><use href="#qq"/></svg>
<svg class="ic" style="left:500px;top:463px" width="14" height="14"><use href="#ck"/></svg>
<svg class="ic" style="left:560px;top:463px" width="14" height="14"><use href="#ck"/></svg>
<svg class="ic" style="left:619px;top:462px" width="15" height="15"><use href="#xx"/></svg>
<div class="t r" style="left:656px;width:58px;top:460px">0,6 c</div>
<div class="t r" style="left:716px;width:58px;top:460px">N/A</div>
<svg class="ic" style="left:789px;top:462px" width="15" height="15"><use href="#qq"/></svg>
<svg class="ic" style="left:829px;top:462px" width="15" height="15"><use href="#qq"/></svg>
<svg class="ic" style="left:869px;top:462px" width="15" height="15"><use href="#qq"/></svg>
<svg class="ic" style="left:909px;top:462px" width="15" height="15"><use href="#qq"/></svg>
<div class="rh" style="top:480px"></div>
<div class="flag" style="top:484px"></div>
<div class="t rus" style="left:49px;top:480px">Russ...</div>
<div class="t adr" style="top:480px">84<b>.</b>38<b>.</b>0<b>.</b>3<i>:</i>3128</div>
<div class="t" style="left:201px;top:480px">http</div>
<svg class="ic" style="left:259px;top:482px" width="15" height="15"><use href="#xx"/></svg>
<svg class="ic" style="left:319px;top:482px" width="15" height="15"><use href="#xx"/></svg>
<svg class="ic" style="left:379px;top:482px" width="15" height="15"><use href="#xx"/></svg>
<svg class="ic" style="left:439px;top:482px" width="15" height="15"><use href="#qq"/></svg>
<svg class="ic" style="left:500px;top:483px" width="14" height="14"><use href="#ck"/></svg>
<svg class="ic" style="left:560px;top:483px" width="14" height="14"><use href="#ck"/></svg>
<svg class="ic" style="left:619px;top:482px" width="15" height="15"><use href="#xx"/></svg>
<div class="t r" style="left:656px;width:58px;top:480px">0,3 c</div>
<div class="t r" style="left:716px;width:58px;top:480px">N/A</div>
<svg class="ic" style="left:789px;top:482px" width="15" height="15"><use href="#qq"/></svg>
<svg class="ic" style="left:829px;top:482px" width="15" height="15"><use href="#qq"/></svg>
<svg class="ic" style="left:869px;top:482px" width="15" height="15"><use href="#qq"/></svg>
<svg class="ic" style="left:909px;top:482px" width="15" height="15"><use href="#qq"/></svg>
<div class="rh" style="top:500px"></div>
<div class="flag" style="top:504px"></div>
<div class="t rus" style="left:49px;top:500px">Russ...</div>
<div class="t adr" style="top:500px">188<b>.</b>43<b>.</b>10<b>.</b>154<i>:</i>3<u>...</u></div>
<div class="t" style="left:201px;top:500px">http</div>
<svg class="ic" style="left:259px;top:502px" width="15" height="15"><use href="#xx"/></svg>
<svg class="ic" style="left:320px;top:503px" width="14" height="14"><use href="#ck"/></svg>
<svg class="ic" style="left:380px;top:503px" width="14" height="14"><use href="#ck"/></svg>
<svg class="ic" style="left:439px;top:502px" width="15" height="15"><use href="#qq"/></svg>
<svg class="ic" style="left:499px;top:502px" width="15" height="15"><use href="#xx"/></svg>
<svg class="ic" style="left:560px;top:503px" width="14" height="14"><use href="#ck"/></svg>
<svg class="ic" style="left:620px;top:503px" width="14" height="14"><use href="#ck"/></svg>
<div class="t r" style="left:656px;width:58px;top:500px">0,2 c</div>
<div class="t r" style="left:716px;width:58px;top:500px">N/A</div>
<svg class="ic" style="left:789px;top:502px" width="15" height="15"><use href="#qq"/></svg>
<svg class="ic" style="left:829px;top:502px" width="15" height="15"><use href="#qq"/></svg>
<svg class="ic" style="left:869px;top:502px" width="15" height="15"><use href="#qq"/></svg>
<svg class="ic" style="left:909px;top:502px" width="15" height="15"><use href="#qq"/></svg>
<div class="rh" style="top:520px"></div>
<div class="flag" style="top:524px"></div>
<div class="t rus" style="left:49px;top:520px">Russ...</div>
<div class="t adr" style="top:520px">37<b>.</b>28<b>.</b>161<b>.</b>146<i>:</i>3<u>...</u></div>
<div class="t" style="left:201px;top:520px">http</div>
<svg class="ic" style="left:259px;top:522px" width="15" height="15"><use href="#xx"/></svg>
<svg class="ic" style="left:319px;top:522px" width="15" height="15"><use href="#xx"/></svg>
<svg class="ic" style="left:379px;top:522px" width="15" height="15"><use href="#xx"/></svg>
<svg class="ic" style="left:439px;top:522px" width="15" height="15"><use href="#qq"/></svg>
<svg class="ic" style="left:500px;top:523px" width="14" height="14"><use href="#ck"/></svg>
<svg class="ic" style="left:560px;top:523px" width="14" height="14"><use href="#ck"/></svg>
<svg class="ic" style="left:619px;top:522px" width="15" height="15"><use href="#xx"/></svg>
<div class="t r" style="left:656px;width:58px;top:520px">0,1 c</div>
<div class="t r" style="left:716px;width:58px;top:520px">N/A</div>
<svg class="ic" style="left:789px;top:522px" width="15" height="15"><use href="#qq"/></svg>
<svg class="ic" style="left:829px;top:522px" width="15" height="15"><use href="#qq"/></svg>
<svg class="ic" style="left:869px;top:522px" width="15" height="15"><use href="#qq"/></svg>
<svg class="ic" style="left:909px;top:522px" width="15" height="15"><use href="#qq"/></svg>
<div class="rh" style="top:540px"></div>
<div class="flag" style="top:544px"></div>
<div class="t rus" style="left:49px;top:540px">Russ...</div>
<div class="t adr" style="top:540px"></div>
<div class="t" style="left:201px;top:540px">http</div>
<svg class="ic" style="left:259px;top:542px" width="15" height="15"><use href="#xx"/></svg>
<svg class="ic" style="left:320px;top:543px" width="14" height="14"><use href="#ck"/></svg>
<svg class="ic" style="left:380px;top:543px" width="14" height="14"><use href="#ck"/></svg>
<svg class="ic" style="left:439px;top:542px" width="15" height="15"><use href="#qq"/></svg>
<svg class="ic" style="left:500px;top:543px" width="14" height="14"><use href="#ck"/></svg>
<svg class="ic" style="left:560px;top:543px" width="14" height="14"><use href="#ck"/></svg>
<svg class="ic" style="left:619px;top:542px" width="15" height="15"><use href="#xx"/></svg>
<div class="t r" style="left:656px;width:58px;top:540px"></div>
<div class="t r" style="left:716px;width:58px;top:540px">N/A</div>
<svg class="ic" style="left:789px;top:542px" width="15" height="15"><use href="#qq"/></svg>
<svg class="ic" style="left:829px;top:542px" width="15" height="15"><use href="#qq"/></svg>
<svg class="ic" style="left:869px;top:542px" width="15" height="15"><use href="#qq"/></svg>
<svg class="ic" style="left:909px;top:542px" width="15" height="15"><use href="#qq"/></svg>
</div>
<div id="sb"></div>
<div class="abs" style="left:939px;top:182px;width:0;height:0;border-left:5px solid transparent;border-right:5px solid transparent;border-bottom:5px solid #555"></div>
<div id="thumb"></div>
<div class="abs" style="left:940px;top:273px;width:8px;height:7px;background:repeating-linear-gradient(180deg,#6a6a6a 0,#6a6a6a 1px,transparent 1px,transparent 2px)"></div>
<div class="abs" style="left:939px;top:732px;width:0;height:0;border-left:5px solid transparent;border-right:5px solid transparent;border-top:5px solid #555"></div>

<!-- legend -->
<svg class="abs" style="left:15px;top:753px" width="14" height="14"><use href="#ck"/></svg>
<div class="lg" style="left:33px">- Поддерживается</div>
<svg class="abs" style="left:143px;top:753px" width="15" height="15"><use href="#xx"/></svg>
<div class="lg" style="left:161px">- Не поддерживается</div>
<svg class="abs" style="left:287px;top:753px" width="15" height="15"><use href="#qq"/></svg>
<div class="lg" style="left:305px">или N/A - Данная проверка не выбрана в настройках источника</div>

<div id="status"></div>
<svg class="abs" style="left:14px;top:776px" width="18" height="18"><defs><radialGradient id="gg" cx="0.45" cy="0.3" r="0.7"><stop offset="0" stop-color="#b8f0a0"/><stop offset="1" stop-color="#3c9a28"/></radialGradient></defs><circle cx="9" cy="9" r="7.5" fill="url(#gg)" stroke="#3a4a3a" stroke-width="1"/></svg>
<div class="ss" style="left:34px">Соединение: Подключено / Сервер проверки прокси: Доступен</div>
<svg class="abs" style="left:370px;top:776px" width="18" height="18"><defs><linearGradient id="dl" x1="0" y1="0" x2="0" y2="1"><stop offset="0" stop-color="#c8ff10"/><stop offset="1" stop-color="#30c800"/></linearGradient></defs><path d="M6.5 3.5 H11.5 V6.5 H15 L9 12.5 L3 6.5 H6.5 Z" fill="url(#dl)" stroke="#10b000" stroke-width="1"/><rect x="2.5" y="13.5" width="13" height="2.5" rx="0.5" fill="#f4f4f4" stroke="#707070" stroke-width="1"/></svg>
<div class="ss" style="left:391px">Источники: 20/20</div>
<svg class="abs" style="left:490px;top:776px" width="18" height="18"><defs><linearGradient id="scr" x1="0" y1="0" x2="0" y2="1"><stop offset="0" stop-color="#b86a08"/><stop offset="1" stop-color="#e8a040"/></linearGradient></defs><rect x="5.5" y="1.5" width="11" height="9.5" rx="1" fill="#f8f8f4" stroke="#6a6a6a" stroke-width="1"/><rect x="7.5" y="3.5" width="7" height="4.5" fill="url(#scr)"/><rect x="6" y="8.8" width="10" height="1.2" fill="#111"/><rect x="1.5" y="5.5" width="11" height="11" rx="1" fill="#f8f8f4" stroke="#6a6a6a" stroke-width="1"/><rect x="3.5" y="7.5" width="7" height="5" fill="url(#scr)"/><rect x="2" y="13.4" width="10" height="1.4" fill="#111"/></svg>
<div class="ss" style="left:511px">Прокси: 2932/11669</div>
<svg class="abs" style="left:943px;top:780px" width="12" height="12"><g fill="#a0a4aa"><rect x="8" y="0" width="2" height="2"/><rect x="4" y="4" width="2" height="2"/><rect x="8" y="4" width="2" height="2"/><rect x="0" y="8" width="2" height="2"/><rect x="4" y="8" width="2" height="2"/><rect x="8" y="8" width="2" height="2"/></g></svg>
</body></html>
